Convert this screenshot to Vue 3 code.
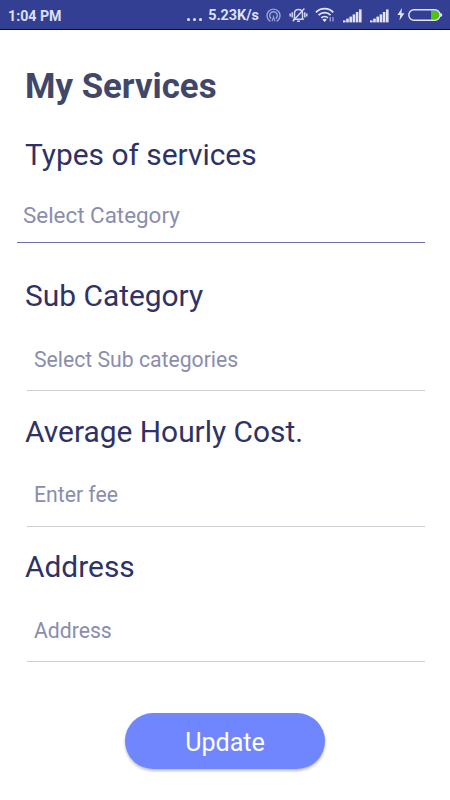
<template>
  <div class="screen">
    <header class="status-bar">
      <span class="clock">1:04 PM</span>
      <div class="status-right">
        <span class="dots"><i></i><i></i><i></i></span>
        <span class="speed">5.23K/s</span>

        <svg class="icon-hotspot" width="15" height="15" viewBox="0 0 15 15" fill="none" stroke="#9ba3d6" stroke-width="1.4">
          <path d="M4.4 13.3A6.5 6.5 0 1 1 10.6 13.3" />
          <path d="M5.2 10.6A3.8 3.8 0 1 1 9.8 10.6" />
          <path d="M7.5 7.4V9.2L6 13.2M7.5 9.2L9 13.2" stroke-width="1.1" />
        </svg>

        <svg class="icon-mute" width="19" height="16" viewBox="0 0 19 16" fill="none" stroke="#d3d7ef" stroke-width="1.5">
          <path d="M5.5 11.8V6.3C5.5 3.9 7.2 2.5 9.5 2.5S13.5 3.9 13.5 6.3V11.8M4.2 12.2H14.8M8 14.2H11" />
          <path d="M3.2 5.2V10.6M1.2 6.5V9.5M15.8 5.2V10.6M17.8 6.5V9.5" />
          <path d="M3.8 14.2L15.4 1.4" />
        </svg>

        <svg class="icon-wifi" width="20" height="16" viewBox="0 0 20 16" fill="none" stroke="#e4e6f6" stroke-width="1.8">
          <path d="M.9 5.4C5.7.4 13.5.4 18.3 5.4" />
          <path d="M3.6 8.2C7 4.8 12.2 4.8 15.6 8.2" />
          <path d="M6.3 10.9C8.1 9.2 11.1 9.2 12.9 10.9" />
          <path d="M7.4 12.5L9.6 14.9L11.8 12.5Q9.6 10.9 7.4 12.5Z" fill="#e4e6f6" stroke="none" />
          <path d="M15.2 10V14.5M18 10V14.5" stroke="#a4abd8" stroke-width="1.2" />
        </svg>

        <svg v-for="n in 2" :key="n" class="icon-signal" width="19" height="14" viewBox="0 0 19 14" fill="#e0e3f4">
          <rect v-for="(h, i) in bars" :key="i" :x="i * 3.2" :y="13.4 - h" width="2.6" :height="h" />
        </svg>

        <svg class="icon-bolt" width="8" height="13" viewBox="0 0 8 13" fill="#e4e6f6">
          <path d="M5 0L.4 7H3.3L2.4 12.6L7.4 5.3H4.4Z" />
        </svg>

        <svg class="icon-battery" width="35" height="12" viewBox="0 0 35 12">
          <path d="M23 1.6H28Q31 1.8 31 6T28 10.4H23Z" fill="#4cc50b" />
          <rect x=".8" y=".8" width="31.2" height="10.4" rx="5.2" fill="none" stroke="#e4e6f6" stroke-width="1.4" />
          <path d="M32.2 4Q34.3 4.2 34.3 6T32.2 8Z" fill="#e4e6f6" />
        </svg>
      </div>
    </header>

    <main class="content">
      <h1 class="title">My Services</h1>

      <div class="field field-category">
        <label for="category">Types of services</label>
        <input id="category" v-model="form.category" type="text" placeholder="Select Category">
      </div>

      <div v-for="field in fields" :key="field.key" class="field">
        <label :for="field.key">{{ field.label }}</label>
        <input :id="field.key" v-model="form[field.key]" type="text" :placeholder="field.hint">
      </div>

      <button type="button" class="btn-update">Update</button>
    </main>
  </div>
</template>

<script setup>
import { ref } from 'vue';

const bars = [2, 3.8, 5.8, 8, 10.4, 13];

const fields = [
  { key: 'subCategory', label: 'Sub Category', hint: 'Select Sub categories' },
  { key: 'hourlyCost', label: 'Average Hourly Cost.', hint: 'Enter fee' },
  { key: 'address', label: 'Address', hint: 'Address' }
];

const form = ref({
  category: '',
  subCategory: '',
  hourlyCost: '',
  address: ''
});
</script>

<style>
body { margin: 0; background: #ffffff; }
</style>

<style scoped>
.screen {
  --color-bar: #323f92;
  --color-label: #2f3266;
  --color-hint: #8a8dae;
  --color-primary: #6f86ff;

  box-sizing: border-box;
  width: 100%;
  height: 800px;
  overflow: hidden;
  background: #ffffff;
  font-family: Roboto, "Liberation Sans", sans-serif;
}

/* Status bar */
.status-bar { box-sizing: border-box; height: 30px; padding: 0 7px 0 8px; display: flex; align-items: center; justify-content: space-between; background: var(--color-bar); border-bottom: 1px solid #05066f; color: #dde0f2; font-size: 14.2px; font-weight: 700; line-height: 18px; }
.clock { padding-top: 2px; }
.status-right { display: flex; align-items: center; }
.status-right svg { display: block; flex: none; }
.dots { display: flex; gap: 2.4px; margin-right: 6px; padding-top: 10px; }
.dots i { width: 3.6px; height: 3.6px; background: #e4e6f6; border-radius: 50%; }
.speed { margin-right: 7px; padding-top: 2px; font-size: 14.4px; }
.icon-hotspot { margin: 1px 8px 0 0; }
.icon-mute { margin-right: 7px; }
.icon-wifi { margin-right: 8px; }
.icon-signal { margin: 2px 8px 0 0; }
.icon-bolt { margin-right: 3px; }

/* Form */
.content { display: flex; flex-direction: column; padding: 36px 25px 0; }
.title { margin: 0 0 31px; font-size: 34.8px; line-height: 40px; font-weight: 700; color: #414769; }
.field { display: flex; flex-direction: column; margin-bottom: 22.5px; }
.field label { font-size: 29.9px; line-height: 36px; color: var(--color-label); }
.field input { box-sizing: border-box; height: 63px; margin: 14px 0 0 2px; padding: 0 0 0 7px; border: none; border-bottom: 1px solid #cfcfd6; border-radius: 0; outline: none; background: transparent; font-family: inherit; font-size: 21.2px; color: var(--color-label); }
.field input::placeholder { color: var(--color-hint); opacity: 1; }

.field-category { margin-bottom: 35px; }
.field-category input { height: 53px; margin: 17px 0 0 -8px; padding: 0 0 3px 6px; border-bottom-color: #6c6ea8; font-size: 22.4px; }

.btn-update { align-self: center; width: 200px; height: 56px; margin-top: 28px; padding: 3px 0 0; border: none; border-radius: 28px; background: var(--color-primary); color: #ffffff; font-family: inherit; font-size: 25.1px; box-shadow: 0 2px 3px rgba(0, 0, 0, 0.26); cursor: pointer; }
</style>
